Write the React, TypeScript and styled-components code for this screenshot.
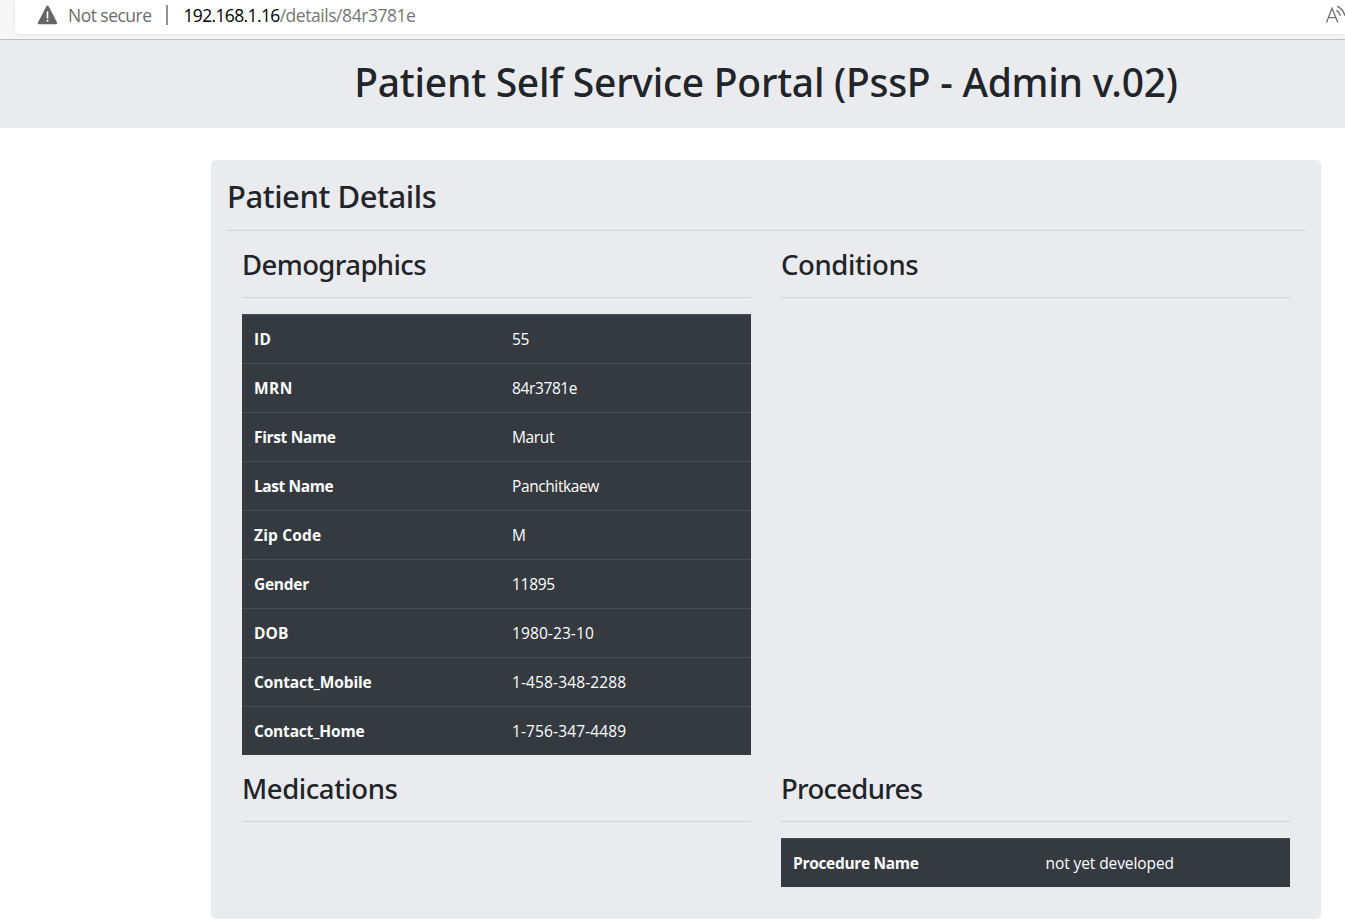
import React from "react";
import styled, { createGlobalStyle } from "styled-components";

const GlobalStyle = createGlobalStyle`
  *, *::before, *::after { box-sizing: border-box; }
  body {
    margin: 0;
    background: #fff;
    color: #212529;
    font-family: "Open Sans", "Noto Sans", sans-serif;
    font-size: 15.5px;
    line-height: 24px;
    overflow: hidden;
  }
`;

const AddressStrip = styled.div`
  height: 40px;
  padding-left: 15px;
  overflow: hidden;
  background: #f7f7f7;
  border-bottom: 1px solid #bcbdbe;
`;

const AddressBar = styled.div`
  display: flex;
  align-items: center;
  height: 34px;
  padding: 0 0 5px 22px;
  background: #fff;
  border-bottom-left-radius: 5px;
  box-shadow: 0 1px 4px rgba(0, 0, 0, 0.09);
  font-size: 17.5px;
  white-space: nowrap;
`;

const WarningIcon = styled.svg`
  flex: none;
  width: 21px;
  height: 20px;
  margin-right: 10px;
`;

const AddressText = styled.span<{ $color: string; $tracking: number }>`
  color: ${(p) => p.$color};
  letter-spacing: ${(p) => p.$tracking}px;
`;

const AddressDivider = styled.span`
  width: 2px;
  height: 20px;
  margin: 0 15.5px 0 14.5px;
  background: #919191;
`;

const ReadAloudIcon = styled.svg`
  flex: none;
  width: 20px;
  height: 20px;
  margin-left: auto;
`;

const Header = styled.header`
  height: 88px;
  padding: 17px 0 0 187px;
  background: #eaebef;
  text-align: center;
`;

const Title = styled.h1`
  margin: 0;
  font: 500 39px/50px "Noto Sans", sans-serif;
  letter-spacing: -0.26px;
  white-space: nowrap;
`;

const Card = styled.main`
  width: 1110px;
  height: 759px;
  margin: 32px 0 0 211px;
  padding: 16px;
  background: #eaebef;
  border-radius: 5px;
`;

const CardTitle = styled.h2`
  margin: 0;
  height: 54px;
  font: 500 31px/40px "Noto Sans", sans-serif;
  letter-spacing: -0.44px;
`;

const Rule = styled.hr`
  height: 1px;
  margin: 0 0 16px;
  border: 0;
  background: #d1d3d7;
`;

const Grid = styled.div`
  display: grid;
  grid-template-columns: 509px 509px;
  grid-template-rows: 524px auto;
  column-gap: 30px;
  padding: 0 15px;
`;

const SectionTitle = styled.h3<{ $tracking: number }>`
  margin: 0;
  height: 50px;
  font: 500 27.5px/35px "Noto Sans", sans-serif;
  letter-spacing: ${(p) => p.$tracking}px;
`;

const DarkTable = styled.dl`
  margin: 0;
  color: #fff;
  background: #343a40;
`;

const Row = styled.div<{ $labelWidth: number }>`
  display: grid;
  grid-template-columns: ${(p) => p.$labelWidth}px 1fr;
  height: 49px;
  padding-top: 12px;
  border-top: 1px solid #454d55;
`;

const Label = styled.dt<{ $tracking: number }>`
  padding-left: 12px;
  font-weight: 700;
  letter-spacing: ${(p) => p.$tracking}px;
`;

const Value = styled.dd<{ $tracking: number }>`
  margin: 0;
  padding-left: 12px;
  letter-spacing: ${(p) => p.$tracking}px;
`;

type Field = { label: string; value: string; labelTracking: number; valueTracking: number };

const demographics: Field[] = [
  { label: "ID", value: "55", labelTracking: 0.3, valueTracking: -0.4 },
  { label: "MRN", value: "84r3781e", labelTracking: 0.4, valueTracking: -0.38 },
  { label: "First Name", value: "Marut", labelTracking: -0.35, valueTracking: -0.35 },
  { label: "Last Name", value: "Panchitkaew", labelTracking: -0.4, valueTracking: -0.4 },
  { label: "Zip Code", value: "M", labelTracking: 0.16, valueTracking: 0 },
  { label: "Gender", value: "11895", labelTracking: -0.28, valueTracking: -0.3 },
  { label: "DOB", value: "1980-23-10", labelTracking: 0.1, valueTracking: 0.1 },
  { label: "Contact_Mobile", value: "1-458-348-2288", labelTracking: -0.13, valueTracking: 0.13 },
  { label: "Contact_Home", value: "1-756-347-4489", labelTracking: -0.19, valueTracking: 0.13 },
];

const procedures: Field[] = [
  { label: "Procedure Name", value: "not yet developed", labelTracking: -0.32, valueTracking: -0.09 },
];

type SectionProps = { title: string; tracking: number; fields?: Field[]; labelWidth?: number };

const Section = ({ title, tracking, fields, labelWidth = 258 }: SectionProps) => (
  <section>
    <SectionTitle $tracking={tracking}>{title}</SectionTitle>
    <Rule />
    {fields && (
      <DarkTable>
        {fields.map((f) => (
          <Row key={f.label} $labelWidth={labelWidth}>
            <Label $tracking={f.labelTracking}>{f.label}</Label>
            <Value $tracking={f.valueTracking}>{f.value}</Value>
          </Row>
        ))}
      </DarkTable>
    )}
  </section>
);

export default function App() {
  return (
    <>
      <GlobalStyle />
      <AddressStrip>
        <AddressBar>
          <WarningIcon viewBox="0 0 21 20">
            <path d="M10.5 1.8 18.9 18H2.1Z" fill="#666" stroke="#666" strokeWidth="2.6" strokeLinejoin="round" />
            <path d="M10.5 7v6" stroke="#fff" strokeWidth="1.6" strokeLinecap="round" />
            <circle cx="10.5" cy="15.7" r="1" fill="#fff" />
          </WarningIcon>
          <AddressText $color="#6b6b6b" $tracking={-0.53}>Not secure</AddressText>
          <AddressDivider />
          <AddressText $color="#000" $tracking={-0.64}>192.168.1.16</AddressText>
          <AddressText $color="#767676" $tracking={-0.45}>/details/84r3781e</AddressText>
          <ReadAloudIcon viewBox="0 0 20 20" fill="none" stroke="#707070" strokeWidth="1.3">
            <path d="M1.5 17.5 7 3.2 12.8 17.5M3.5 12.7h7.3" />
            <path d="M11.4 5.4a9 9 0 0 1 4.1 5.4M12.2 1.2a15 15 0 0 1 7.8 9.6" />
          </ReadAloudIcon>
        </AddressBar>
      </AddressStrip>
      <Header>
        <Title>Patient Self Service Portal (PssP - Admin v.02)</Title>
      </Header>
      <Card>
        <CardTitle>Patient Details</CardTitle>
        <Rule />
        <Grid>
          <Section title="Demographics" tracking={-0.6} fields={demographics} />
          <Section title="Conditions" tracking={-0.42} />
          <Section title="Medications" tracking={-0.43} />
          <Section title="Procedures" tracking={-0.72} fields={procedures} labelWidth={252.5} />
        </Grid>
      </Card>
    </>
  );
}
